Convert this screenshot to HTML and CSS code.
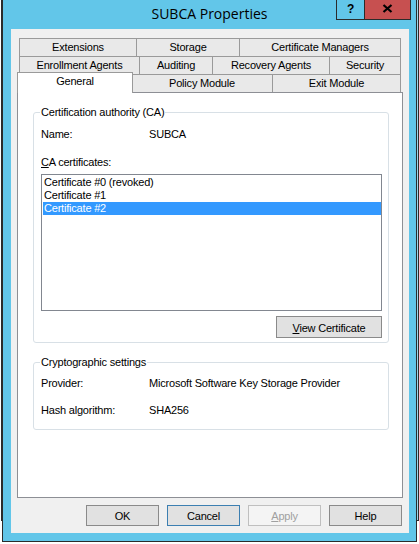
FILE: index.html
```html
<!DOCTYPE html>
<html>
<head>
<meta charset="utf-8">
<title>SUBCA Properties</title>
<link rel="stylesheet" href="styles.css">
</head>
<body>
<div class="desktop">
  <div class="behind"></div>
  <div class="window">
    <div class="titlebar">
      <div></div>
      <div class="title">SUBCA Properties</div>
      <div class="caption-buttons">
        <div class="cbtn help">?</div>
        <div class="cbtn close">
          <svg width="11" height="9" viewBox="0 0 11 9"><path d="M1.5 1 L9.5 8 M9.5 1 L1.5 8" stroke="#000" stroke-width="2.2" fill="none"/></svg>
        </div>
      </div>
    </div>
    <div class="client">
      <div class="tabs">
        <div class="tabrow">
          <div class="tab w117">Extensions</div>
          <div class="tab w103">Storage</div>
          <div class="tab w162 last">Certificate Managers</div>
        </div>
        <div class="tabrow">
          <div class="tab w120">Enrollment Agents</div>
          <div class="tab w73">Auditing</div>
          <div class="tab w117">Recovery Agents</div>
          <div class="tab w72 last">Security</div>
        </div>
        <div class="tabrow front">
          <div class="tab sel">General</div>
          <div class="tab w141">Policy Module</div>
          <div class="tab w129 last">Exit Module</div>
        </div>
      </div>
      <div class="panel">
        <fieldset class="group g1">
          <legend>Certification authority (CA)</legend>
          <div class="row first">
            <span class="label">Name:</span><span class="value">SUBCA</span>
          </div>
          <div class="row certs-label"><span><u>C</u>A certificates:</span></div>
          <div class="listbox">
            <div class="item">Certificate #0 (revoked)</div>
            <div class="item">Certificate #1</div>
            <div class="item selected">Certificate #2</div>
          </div>
          <div class="btnrow">
            <div class="button view"><span><u>V</u>iew Certificate</span></div>
          </div>
        </fieldset>
        <fieldset class="group g2">
          <legend>Cryptographic settings</legend>
          <div class="row first">
            <span class="label">Provider:</span><span class="value">Microsoft Software Key Storage Provider</span>
          </div>
          <div class="row second">
            <span class="label">Hash algorithm:</span><span class="value">SHA256</span>
          </div>
        </fieldset>
      </div>
      <div class="footer">
        <div class="button">OK</div>
        <div class="button default">Cancel</div>
        <div class="button disabled"><span><u>A</u>pply</span></div>
        <div class="button">Help</div>
      </div>
    </div>
  </div>
</div>
</body>
</html>
```
FILE: styles.css
```css
* { box-sizing: border-box; }
html, body {
  margin: 0;
  padding: 0;
  background: #ffffff;
  width: 419px;
  height: 544px;
  overflow: hidden;
}
.desktop {
  position: relative;
  width: 419px;
  height: 544px;
  font-family: "Liberation Sans", Arial, sans-serif;
  font-size: 11px;
  letter-spacing: -0.2px;
  color: #000;
}
.behind {
  position: absolute;
  left: 1px;
  top: -1px;
  width: 418px;
  height: 522px;
  border: 1px solid #2b2b2b;
  background: #9fd6ea;
}
.window {
  position: relative;
  margin-left: 2px;
  width: 415px;
  height: 542px;
  border: 1px solid #2b2b2b;
  border-top: none;
  background: #62c6e9;
  display: flex;
  flex-direction: column;
}
.titlebar {
  height: 29px;
  display: grid;
  grid-template-columns: 1fr auto 1fr;
  align-items: start;
}
.title {
  font-family: "Open Sans", "Noto Sans", sans-serif;
  font-size: 14px;
  letter-spacing: 0;
  line-height: 20px;
  padding-top: 4px;
  color: #000;
  white-space: nowrap;
}
.caption-buttons {
  justify-self: end;
  display: flex;
  margin-right: 5px;
}
.cbtn {
  height: 20px;
  border: 1px solid #2b2b2b;
  border-top: none;
  display: flex;
  align-items: center;
  justify-content: center;
}
.cbtn.help {
  width: 29px;
  font-family: "Liberation Sans", Arial, sans-serif;
  font-weight: bold;
  font-size: 12px;
  padding-bottom: 2px;
}
.cbtn.close {
  width: 47px;
  margin-left: -1px;
  background: #c75050;
  padding-bottom: 2px;
}
.client {
  margin: 0 7px 0 8px;
  height: 504px;
  background: #f0f0f0;
  padding: 9px 6px 0 6px;
  display: flex;
  flex-direction: column;
}
.tabs {
  margin: 0 2px;
  display: flex;
  flex-direction: column;
}
.tabrow {
  display: flex;
  height: 18px;
  align-items: flex-start;
}
.tab {
  height: 18px;
  border-top: 1px solid #9a9a9a;
  border-left: 1px solid #9a9a9a;
  background: #e9e9e9;
  text-align: center;
  line-height: 16px;
  white-space: nowrap;
}
.tab.last { border-right: 1px solid #9a9a9a; }
.tab.w117 { width: 117px; }
.tab.w103 { width: 103px; }
.tab.w162 { width: 162px; }
.tab.w120 { width: 120px; }
.tab.w73 { width: 73px; }
.tab.w72 { width: 72px; }
.tab.w141 { width: 141px; }
.tab.w129 { width: 129px; }
.tab.sel {
  position: relative;
  z-index: 2;
  width: 116px;
  height: 21px;
  margin: -2px -2px 0 -2px;
  background: #ffffff;
  border-right: 1px solid #9a9a9a;
  line-height: 17px;
}
.panel {
  position: relative;
  z-index: 1;
  height: 406px;
  background: #ffffff;
  border: 1px solid #8d8f95;
  padding: 0 13px 0 15px;
}
.group {
  margin: 0;
  border: 1px solid #d8e0e6;
  border-radius: 3px;
  padding: 0 6px 0 7px;
  min-width: 0;
}
.group legend {
  padding: 0 1px;
  margin-left: -1px;
  line-height: 13px;
  height: 13px;
}
.g1 { margin-top: 13px; padding-bottom: 4px; }
.g2 { margin-top: 13px; padding-bottom: 12px; }
.row {
  display: flex;
  height: 13px;
  line-height: 13px;
  white-space: nowrap;
}
.label { width: 108px; }
.g1 .row.first { margin-top: 9px; }
.row.certs-label { margin-top: 15px; }
.g2 .row.first { margin-top: 8px; }
.g2 .row.second { margin-top: 14px; }
.listbox {
  margin-top: 5px;
  height: 137px;
  border: 1px solid #828790;
  background: #fff;
  padding-top: 1px;
}
.item {
  height: 13px;
  line-height: 13px;
  margin-left: 1px;
  padding-left: 1px;
  white-space: nowrap;
}
.item.selected {
  background: #3399ff;
  color: #fff;
}
.btnrow {
  margin-top: 5px;
  display: flex;
  justify-content: flex-end;
}
.button {
  width: 73px;
  height: 21px;
  background: #e1e1e1;
  border: 1px solid #8a8a8a;
  display: flex;
  align-items: center;
  justify-content: center;
  white-space: nowrap;
  padding-top: 1px;
}
.button.view {
  width: 106px;
  height: 22px;
}
.button.default {
  border-color: #3c7fb1;
}
.button.disabled {
  background: #f4f4f4;
  border-color: #bfbfbf;
  color: #a0a0a0;
}
.footer {
  margin-top: 7px;
  display: flex;
  justify-content: flex-end;
  gap: 8px;
  padding-right: 1px;
}
```
